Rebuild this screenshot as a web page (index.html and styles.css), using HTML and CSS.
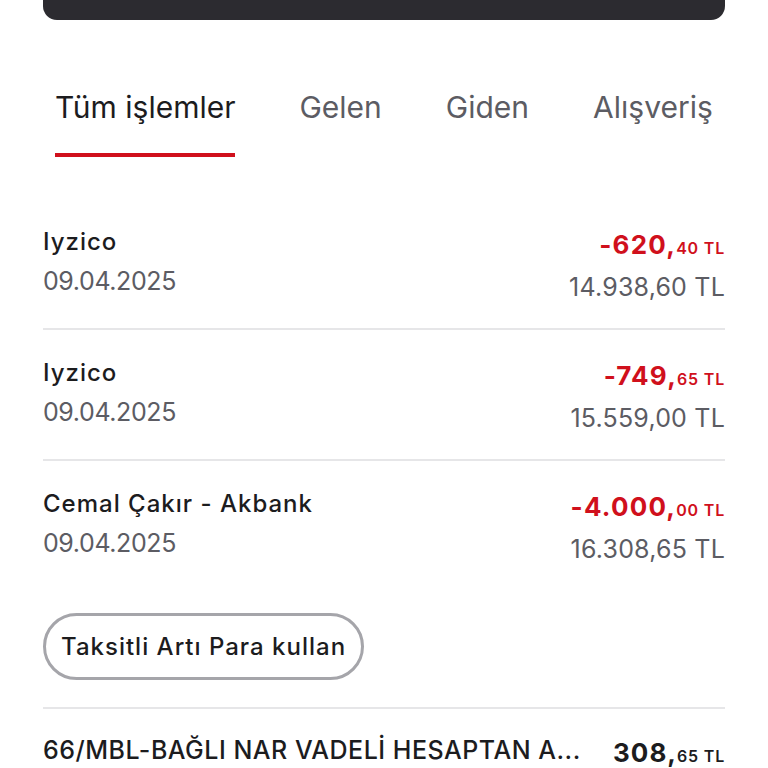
FILE: index.html
```html
<!DOCTYPE html>
<html lang="tr">

<head>
    <meta charset="UTF-8">
    <meta name="viewport" content="width=device-width, initial-scale=1.0">
    <title>Hesap hareketleri</title>
    <link rel="stylesheet" href="styles.css">
</head>

<body>
    <div class="container">
        <div class="topbar"></div> <!-- Card above -->

        <nav class="tabs">
            <a class="tab active">Tüm işlemler</a>
            <a class="tab">Gelen</a>
            <a class="tab">Giden</a>
            <a class="tab">Alışveriş</a>
        </nav>

        <section class="list">
            <div class="row">
                <div class="left">
                    <div class="name">Iyzico</div>
                    <div class="date">09.04.2025</div>
                </div>
                <div class="right">
                    <div class="amount minus">-620,<small>40 TL</small></div>
                    <div class="balance">14.938,60 TL</div>
                </div>
            </div>
            <div class="row">
                <div class="left">
                    <div class="name">Iyzico</div>
                    <div class="date">09.04.2025</div>
                </div>
                <div class="right">
                    <div class="amount minus">-749,<small>65 TL</small></div>
                    <div class="balance">15.559,00 TL</div>
                </div>
            </div>
            <div class="row last">
                <div class="left">
                    <div class="name">Cemal Çakır - Akbank</div>
                    <div class="date">09.04.2025</div>
                </div>
                <div class="right">
                    <div class="amount minus">-4.000,<small>00 TL</small></div>
                    <div class="balance">16.308,65 TL</div>
                </div>
            </div>

            <button type="button" class="pill">Taksitli Artı Para kullan</button>

            <div class="row top-line">
                <div class="left">
                    <div class="name big">66/MBL-BAĞLI NAR VADELİ HESAPTAN A...</div>
                </div>
                <div class="right">
                    <div class="amount">308,<small>65 TL</small></div>
                </div>
            </div>
        </section>
    </div>
</body>

</html>
```

FILE: styles.css
```css
body {
    margin: 0;
    padding: 0;
    background-color: #fff;
    font-family: "Inter", "Noto Sans", sans-serif;
    color: #1c1c1e;
    overflow: hidden;
}

* {
    box-sizing: border-box;
}

.container {
    padding: 0 43px;
}

/* Dark card cut off at the top */
.topbar {
    height: 20px;
    background-color: #2c2b30;
    border-radius: 0 0 14px 14px;
}

/* Tabs */
.tabs {
    display: flex;
    gap: 64px;
    padding: 0 12px;
    margin-top: 70px;
}

.tab {
    font-size: 30px;
    line-height: 34px;
    color: #5c5c63;
    padding-bottom: 29px;
    border-bottom: 4px solid transparent;
    text-decoration: none;
}

.tab.active {
    color: #1c1c1e;
    border-bottom-color: #d0101c;
}

/* Transactions */
.list {
    margin-top: 42px;
}

.row {
    display: flex;
    justify-content: space-between;
    align-items: flex-start;
    padding: 29px 0 27px;
    border-bottom: 2px solid #e6e6e8;
}

.row.last {
    border-bottom: none;
}

.row.top-line {
    border-top: 2px solid #e6e6e8;
    border-bottom: none;
    margin-top: 27px;
    padding-top: 27px;
}

.name {
    font-size: 24px;
    line-height: 28px;
    font-weight: 500;
    letter-spacing: 1px;
    white-space: nowrap;
}

.name.big {
    font-size: 25px;
    letter-spacing: 0.5px;
}

.date {
    font-size: 25px;
    line-height: 28px;
    letter-spacing: -0.4px;
    color: #5c5c63;
    margin-top: 11px;
}

.right {
    text-align: right;
    margin-top: 2px;
}

.amount {
    font-size: 26px;
    line-height: 30px;
    font-weight: 700;
    letter-spacing: 1.2px;
}

.amount small {
    font-size: 16px;
    font-weight: 600;
    line-height: 1;
    letter-spacing: 0.8px;
}

.amount.minus {
    color: #d0101c;
}

.balance {
    font-size: 25px;
    line-height: 28px;
    letter-spacing: 0.2px;
    color: #5c5c63;
    margin-top: 13px;
}

/* Pill button */
.pill {
    display: inline-block;
    font-family: inherit;
    font-size: 24px;
    font-weight: 500;
    letter-spacing: 1px;
    color: #1c1c1e;
    background-color: #fff;
    border: 3px solid #a5a5aa;
    border-radius: 40px;
    height: 67px;
    padding: 0 15px;
    margin-top: 23px;
    cursor: pointer;
}
```
